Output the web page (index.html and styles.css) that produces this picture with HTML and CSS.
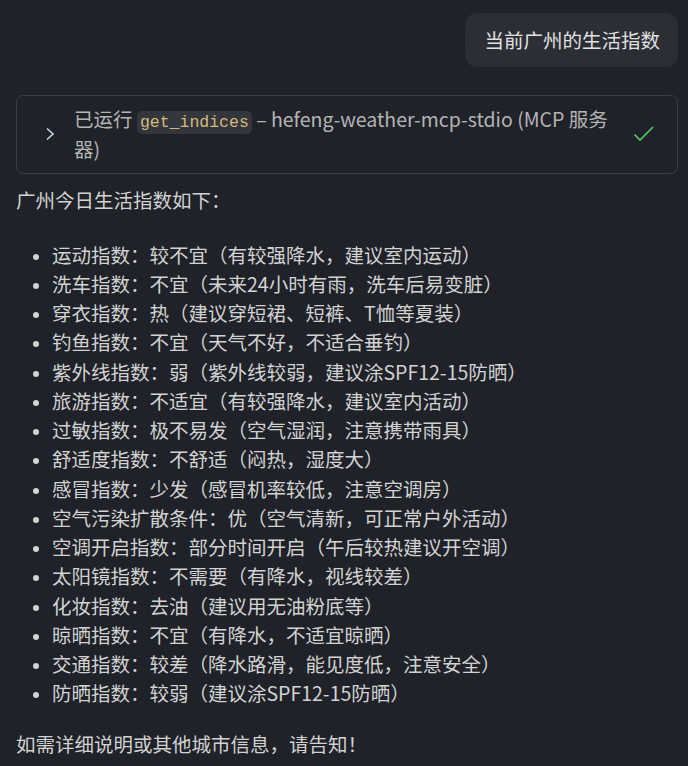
FILE: index.html
```html
<!DOCTYPE html>
<html lang="zh">
<head>
<meta charset="utf-8">
<link rel="stylesheet" href="styles.css">
</head>
<body>
<div class="chat">
  <div class="user-row">
    <div class="bubble">当前广州的生活指数</div>
  </div>
  <div class="tool">
    <span class="chev"><svg width="12" height="16" viewBox="0 0 12 16"><path d="M3 2.5 L9 8 L3 13.5" fill="none" stroke="#c9d6e8" stroke-width="1.6"/></svg></span>
    <div class="tool-text">已运行 <code>get_indices</code> – hefeng-weather-mcp-stdio (MCP 服务器)</div>
    <span class="check"><svg width="22" height="18" viewBox="0 0 22 18"><path d="M1.5 9.5 L7 15 L20 2" fill="none" stroke="#59c766" stroke-width="1.7"/></svg></span>
  </div>
  <div class="answer">
    <p class="intro">广州今日生活指数如下：</p>
    <ul class="list">
      <li>运动指数：较不宜（有较强降水，建议室内运动）</li>
      <li>洗车指数：不宜（未来24小时有雨，洗车后易变脏）</li>
      <li>穿衣指数：热（建议穿短裙、短裤、T恤等夏装）</li>
      <li>钓鱼指数：不宜（天气不好，不适合垂钓）</li>
      <li>紫外线指数：弱（紫外线较弱，建议涂SPF12-15防晒）</li>
      <li>旅游指数：不适宜（有较强降水，建议室内活动）</li>
      <li>过敏指数：极不易发（空气湿润，注意携带雨具）</li>
      <li>舒适度指数：不舒适（闷热，湿度大）</li>
      <li>感冒指数：少发（感冒机率较低，注意空调房）</li>
      <li>空气污染扩散条件：优（空气清新，可正常户外活动）</li>
      <li>空调开启指数：部分时间开启（午后较热建议开空调）</li>
      <li>太阳镜指数：不需要（有降水，视线较差）</li>
      <li>化妆指数：去油（建议用无油粉底等）</li>
      <li>晾晒指数：不宜（有降水，不适宜晾晒）</li>
      <li>交通指数：较差（降水路滑，能见度低，注意安全）</li>
      <li>防晒指数：较弱（建议涂SPF12-15防晒）</li>
    </ul>
    <p class="outro">如需详细说明或其他城市信息，请告知！</p>
  </div>
</div>
</body>
</html>
```

FILE: styles.css
```css
html, body {
  margin: 0;
  padding: 0;
  background: #1f2228;
}
body {
  font-family: "Noto Sans CJK SC", "Noto Sans", sans-serif;
  font-size: 19.5px;
  line-height: 29.25px;
  color: #d2d2d2;
}
.chat {
  padding: 13px 10px 0 16px;
}
.user-row {
  display: flex;
  justify-content: flex-end;
}
.bubble {
  background: #2b2e35;
  border-radius: 12px;
  padding: 12px 18px 13px 19px;
  color: #e0e0e0;
}
.tool {
  margin-top: 28px;
  border: 1px solid #3a3d44;
  border-radius: 7px;
  display: flex;
  align-items: center;
  padding: 8px 22px 9px 27px;
  color: #b4b4b4;
}
.chev {
  display: flex;
  width: 30px;
  flex: none;
}
.tool-text {
  flex: 1;
  line-height: 30px;
  padding-right: 14px;
}
.tool-text code {
  font-family: "Liberation Mono", monospace;
  font-size: 16.5px;
  line-height: 1;
  color: #d7b97c;
  background: #33363d;
  border-radius: 5px;
  padding: 2px 3px;
}
.check {
  display: flex;
  flex: none;
}
.answer p {
  margin: 0;
}
.intro {
  margin-top: 11px !important;
}
.list {
  margin: 25px 0 0 0;
  padding-left: 36px;
}
.list li::marker {
  font-size: 16px;
}
.outro {
  margin-top: 21px !important;
}
```
